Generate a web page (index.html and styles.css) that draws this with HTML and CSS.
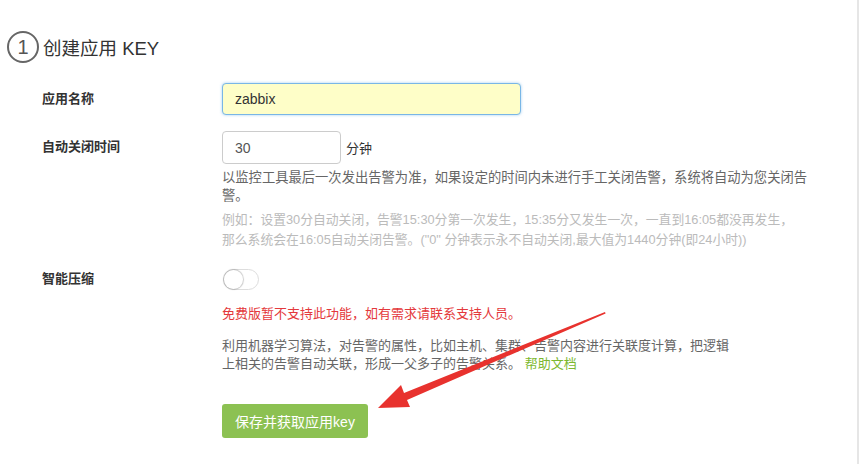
FILE: index.html
```html
<!DOCTYPE html>
<html lang="zh-CN">
<head>
    <meta charset="UTF-8">
    <meta name="viewport" content="width=device-width, initial-scale=1.0">
    <title>创建应用 KEY</title>
    <link rel="stylesheet" href="styles.css">
</head>
<body>
    <div class="page">
        <div class="step-title">
            <span class="step-num">1</span>
            <span class="step-text">创建应用 KEY</span>
        </div>
        <div class="form">
            <div class="form-row row-name">
                <label class="form-label">应用名称</label>
                <div class="form-field">
                    <input type="text" class="input input-name" value="zabbix">
                </div>
            </div>
            <div class="form-row row-time">
                <label class="form-label">自动关闭时间</label>
                <div class="form-field">
                    <div class="inline">
                        <input type="text" class="input input-time" value="30">
                        <span class="unit">分钟</span>
                    </div>
                    <p class="help">以监控工具最后一次发出告警为准，如果设定的时间内未进行手工关闭告警，系统将自动为您关闭告警。</p>
                    <p class="hint">例如：设置30分自动关闭，告警15:30分第一次发生，15:35分又发生一次，一直到16:05都没再发生，那么系统会在16:05自动关闭告警。("0" 分钟表示永不自动关闭,最大值为1440分钟(即24小时))</p>
                </div>
            </div>
            <div class="form-row row-compress">
                <label class="form-label">智能压缩</label>
                <div class="form-field">
                    <span class="switch"><span class="switch-knob"></span></span>
                    <p class="warn">免费版暂不支持此功能，如有需求请联系支持人员。</p>
                    <p class="desc">利用机器学习算法，对告警的属性，比如主机、集群、告警内容进行关联度计算，把逻辑上相关的告警自动关联，形成一父多子的告警关系。 <a class="link" href="#">帮助文档</a></p>
                </div>
            </div>
            <div class="form-row row-submit">
                <span></span>
                <div class="form-field">
                    <button class="btn-save">保存并获取应用key</button>
                </div>
            </div>
        </div>
        <svg class="arrow" width="861" height="464" viewBox="0 0 861 464">
            <polygon points="605,312 605.6,313.4 407,400 410,407 378,408 401,385 404,393" fill="#e8322e"/>
        </svg>
    </div>
</body>
</html>
```

FILE: styles.css
```css
body {
    margin: 0;
    padding: 0;
    background: #fff;
    font-family: "Liberation Sans", Arial, "Noto Sans CJK SC", sans-serif;
    color: #333;
}
.page {
    position: relative;
    width: 857px;
    height: 464px;
    border-right: 2px solid #e6e6e6;
    background: #fff;
    overflow: hidden;
}
.step-title {
    display: flex;
    align-items: center;
    padding: 31px 0 0 7px;
}
.step-num {
    width: 28px;
    height: 28px;
    border: 2px solid #666;
    border-radius: 50%;
    display: flex;
    justify-content: center;
    align-items: center;
    font-size: 20px;
    color: #555;
    line-height: 1;
}
.step-text {
    margin-left: 4px;
    font-size: 18.5px;
    color: #333;
}
.form {
    padding: 20px 0 0 42px;
}
.form-row {
    display: grid;
    grid-template-columns: 180px 1fr;
}
.form-label {
    font-size: 13px;
    font-weight: bold;
    color: #333;
    line-height: 32px;
}
.input {
    box-sizing: border-box;
    height: 32px;
    border: 1px solid #ccc;
    border-radius: 4px;
    padding: 0 12px;
    font-family: "Liberation Sans", Arial, sans-serif;
    font-size: 14px;
    color: #333;
    outline: none;
    background: #fff;
}
.input-name {
    width: 299px;
    background: #fefec8;
    border-color: #79b6e6;
    box-shadow: 0 0 3px rgba(102, 175, 233, 0.6);
}
.row-time {
    margin-top: 16px;
}
.input-time {
    width: 119px;
    height: 33px;
    color: #555;
}
.inline {
    display: flex;
    align-items: center;
}
.unit {
    margin-left: 5px;
    font-size: 13px;
}
.help {
    width: 590px;
    margin: 5px 0 0;
    font-size: 13.3px;
    line-height: 18px;
    color: #666;
}
.hint {
    width: 578px;
    margin: 5px 0 0;
    font-size: 12.8px;
    line-height: 20px;
    color: #bbb;
}
.row-compress {
    margin-top: 19px;
}
.row-compress .form-label {
    line-height: 20px;
}
.switch {
    display: block;
    position: relative;
    box-sizing: border-box;
    width: 36px;
    height: 21px;
    margin-left: 1px;
    border: 1px solid #ddd;
    border-radius: 11px;
    background: #fff;
}
.switch-knob {
    position: absolute;
    top: 0;
    left: 0;
    width: 19px;
    height: 19px;
    border-radius: 50%;
    background: #fff;
    box-shadow: 0 0 1px 1px rgba(0, 0, 0, 0.2);
}
.warn {
    margin: 15px 0 0;
    font-size: 13px;
    line-height: 18px;
    color: #e4393c;
}
.desc {
    width: 516px;
    margin: 14px 0 0;
    font-size: 13px;
    line-height: 18px;
    color: #666;
}
.link {
    color: #7cb82f;
    text-decoration: none;
}
.row-submit {
    margin-top: 31px;
}
.btn-save {
    width: 146px;
    height: 34px;
    border: none;
    border-radius: 3px;
    background: #8cc152;
    color: #fff;
    font-family: "Liberation Sans", Arial, "Noto Sans CJK SC", sans-serif;
    font-size: 14px;
    cursor: pointer;
}
.arrow {
    position: absolute;
    top: 0;
    left: 0;
    pointer-events: none;
}
```
